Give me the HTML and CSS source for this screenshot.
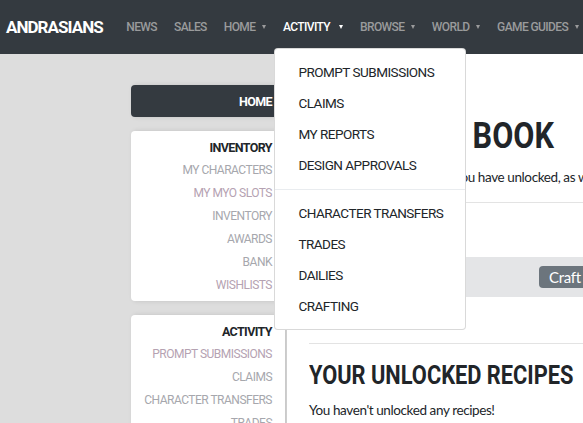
FILE: index.html
```html
<!DOCTYPE html>
<html>
<head>
<meta charset="utf-8">
<link rel="stylesheet" href="styles.css">
</head>
<body>
<nav class="navbar">
  <a class="brand">ANDRASIANS</a>
  <ul class="nav">
    <li class="nav-item">NEWS</li>
    <li class="nav-item">SALES</li>
    <li class="nav-item caret">HOME</li>
    <li class="nav-item caret active">ACTIVITY
      <div class="dropdown">
        <div class="dd-item">PROMPT SUBMISSIONS</div>
        <div class="dd-item">CLAIMS</div>
        <div class="dd-item">MY REPORTS</div>
        <div class="dd-item">DESIGN APPROVALS</div>
        <div class="dd-divider"></div>
        <div class="dd-item">CHARACTER TRANSFERS</div>
        <div class="dd-item">TRADES</div>
        <div class="dd-item">DAILIES</div>
        <div class="dd-item">CRAFTING</div>
      </div>
    </li>
    <li class="nav-item caret">BROWSE</li>
    <li class="nav-item caret">WORLD</li>
    <li class="nav-item caret">GAME GUIDES</li>
  </ul>
</nav>
<div class="page">
  <aside class="sidebar">
    <div class="card card-dark"><div class="side-title light">HOME</div></div>
    <div class="card">
      <div class="side-title">INVENTORY</div>
      <div class="side-link">MY CHARACTERS</div>
      <div class="side-link pink">MY MYO SLOTS</div>
      <div class="side-link">INVENTORY</div>
      <div class="side-link">AWARDS</div>
      <div class="side-link">BANK</div>
      <div class="side-link pink">WISHLISTS</div>
    </div>
    <div class="card">
      <div class="side-title">ACTIVITY</div>
      <div class="side-link pink">PROMPT SUBMISSIONS</div>
      <div class="side-link">CLAIMS</div>
      <div class="side-link">CHARACTER TRANSFERS</div>
      <div class="side-link">TRADES</div>
    </div>
  </aside>
  <main class="main">
    <div class="breadcrumb">Home / Crafting</div>
    <h1 class="h1"><span class="cond">MY RECIPE BOOK</span></h1>
    <p class="lead">Listed are the recipes that you have unlocked, as well as automatically unlocked recipes.</p>
    <hr class="rule">
    <div class="spacer"></div>
    <div class="filter">
      <span class="btn">Craft</span>
    </div>
    <hr class="rule rule2">
    <h2 class="h2"><span class="cond">YOUR UNLOCKED RECIPES</span></h2>
    <p class="text">You haven't unlocked any recipes!</p>
  </main>
</div>
</body>
</html>
```
FILE: styles.css
```css
* { box-sizing: border-box; }
html, body { margin: 0; padding: 0; }
body {
  width: 583px;
  height: 423px;
  overflow: hidden;
  background: #dddddd;
  font-family: Roboto, "Liberation Sans", sans-serif;
  color: #212529;
}
.navbar {
  height: 54px;
  background: #343a40;
  display: flex;
  align-items: center;
  padding: 0 0 0 6px;
  position: relative;
  z-index: 10;
}
.brand {
  color: #fff;
  font-weight: 700;
  font-size: 17px;
  letter-spacing: -0.95px;
  margin-right: 15px;
  white-space: nowrap;
}
.nav {
  list-style: none;
  margin: 0;
  padding: 0;
  display: flex;
  white-space: nowrap;
}
.nav-item {
  color: #9a9b9c;
  font-size: 12px;
  font-weight: 500;
  letter-spacing: -0.6px;
  padding: 0 8.5px;
  position: relative;
}
.nav-item.active { color: #fff; }
.caret::after {
  content: "";
  display: inline-block;
  margin-left: 6.5px;
  vertical-align: 2px;
  border-top: 4px solid currentColor;
  border-left: 2.5px solid transparent;
  border-right: 2.5px solid transparent;
}
.dropdown {
  position: absolute;
  left: 0;
  top: 28px;
  width: 192px;
  background: #fff;
  border: 1px solid rgba(0,0,0,0.15);
  border-radius: 4px;
  padding: 7.5px 0;
}
.dd-item {
  height: 31px;
  line-height: 31px;
  padding-left: 23px;
  font-size: 13.5px;
  font-weight: 400;
  letter-spacing: -0.5px;
  color: #212529;
}
.dd-divider {
  height: 1px;
  background: #e9ecef;
  margin: 8px 0;
}
.page {
  display: flex;
  align-items: flex-start;
}
.sidebar {
  width: 154px;
  margin-left: 131px;
  padding-top: 31px;
  display: flex;
  flex-direction: column;
  gap: 14px;
  flex-shrink: 0;
}
.card {
  background: #fff;
  border-radius: 4px;
  padding: 4.5px 13px;
  text-align: right;
  box-shadow: 2px 0 5px rgba(0,0,0,0.12);
}
.card-dark {
  background: #343a40;
  height: 32px;
  padding: 4.5px 13px;
}
.side-title {
  line-height: 23px;
  font-size: 12.5px;
  font-weight: 700;
  letter-spacing: -0.6px;
  color: #212529;
  white-space: nowrap;
}
.side-title.light { color: #fff; }
.side-link {
  line-height: 23px;
  font-size: 12px;
  letter-spacing: -0.5px;
  color: #a6a7ad;
  white-space: nowrap;
}
.side-link.pink { color: #b5a2b2; }
.main {
  margin-left: 2px;
  width: 500px;
  flex-shrink: 0;
  background: #fff;
  min-height: 369px;
  padding: 0 22px;
}
.breadcrumb {
  height: 52px;
  padding-top: 16px;
  font-family: Lato, sans-serif;
  font-size: 13px;
  color: #6c757d;
}
.cond {
  display: inline-block;
  transform: scaleX(0.855);
  transform-origin: left center;
}
.h1 .cond { transform: scaleX(0.84); }
.h1 {
  margin: 0;
  font-size: 36.5px;
  font-weight: 700;
  line-height: 60px;
  white-space: nowrap;
}
.lead {
  margin: 0;
  font-family: Lato, sans-serif;
  font-size: 13.5px;
  letter-spacing: -0.4px;
  line-height: 22px;
  white-space: nowrap;
}
.rule {
  border: 0;
  border-top: 1px solid #e3e3e3;
  margin: 14px -22px 0;
}
.spacer { height: 54px; }
.filter {
  height: 40px;
  background: #e4e5e7;
  margin: 0 -22px;
  display: flex;
  align-items: center;
  padding-left: 252px;
}
.btn {
  background: #6c757d;
  color: #fff;
  font-family: Lato, sans-serif;
  font-size: 15px;
  letter-spacing: -0.3px;
  border-radius: 4px;
  padding: 0 10px;
  line-height: 22px;
}
.rule2 { margin: 46px 0 7px; }
.h2 {
  margin: 0;
  font-size: 25.5px;
  font-weight: 700;
  line-height: 48px;
  white-space: nowrap;
}
.text {
  margin: 0;
  font-family: Lato, sans-serif;
  font-size: 13.5px;
  letter-spacing: -0.4px;
  line-height: 22px;
}
```
